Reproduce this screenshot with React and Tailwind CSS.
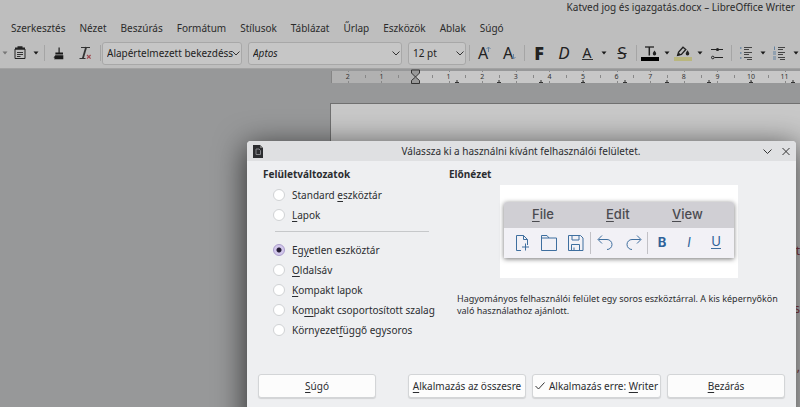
import { useState } from "react";

const menus = [
  "Szerkesztés",
  "Nézet",
  "Beszúrás",
  "Formátum",
  "Stílusok",
  "Táblázat",
  "Űrlap",
  "Eszközök",
  "Ablak",
  "Súgó",
];

// text before the access key, the key itself, text after it
const variants = [
  { id: "standard", label: ["Standard ", "e", "szköztár"] },
  { id: "tabbed", label: ["", "L", "apok"] },
  { id: "single", label: ["Eg", "y", "etlen eszköztár"] },
  { id: "sidebar", label: ["", "O", "ldalsáv"] },
  { id: "compact", label: ["", "K", "ompakt lapok"] },
  { id: "grouped", label: ["Ko", "m", "pakt csoportosított szalag"] },
  { id: "contextual", label: ["Környezet", "f", "üggő egysoros"] },
];

const AccessLabel = ({ parts }) => (
  <span>
    {parts[0]}
    <span className="underline underline-offset-2">{parts[1]}</span>
    {parts[2]}
  </span>
);

const Separator = ({ wide }) => (
  <div className={`flex shrink-0 justify-center ${wide ? "w-1.5" : "w-1"}`}>
    <div className="h-4 w-px bg-[#a5a5a5]" />
  </div>
);

const Caret = ({ wide, label, faded }) => (
  <button
    aria-label={label}
    className={`flex h-6 shrink-0 items-center justify-center ${wide ? "w-3" : "w-2.5"} ${
      faded ? "text-[#777]" : "text-[#1a1a1a]"
    }`}
  >
    <svg width="6" height="4" viewBox="0 0 6 4">
      <path d="M0.5 0.5h5L3 3.6z" fill="currentColor" />
    </svg>
  </button>
);

const Tool = ({ label, width = "w-6", children }) => (
  <button
    aria-label={label}
    className={`flex h-6 shrink-0 items-center justify-center ${width}`}
  >
    {children}
  </button>
);

const Combo = ({ label, value, width, italic }) => (
  <div className={`relative shrink-0 ${width}`}>
    <select
      aria-label={label}
      className={`h-[23px] w-full appearance-none rounded-[3px] border border-[#a8a8a8] bg-[#c6c6c6] pl-1 text-[10px] text-[#222] ${
        italic ? "italic" : ""
      }`}
    >
      <option>{value}</option>
    </select>
    <svg
      className="pointer-events-none absolute top-2 right-0.5"
      width="8"
      height="7"
      viewBox="0 0 8 7"
      fill="none"
      stroke="#333"
    >
      <path d="M0.5 1.5L4 5l3.500-3.500" />
    </svg>
  </div>
);

const Toolbar = () => (
  <div className="flex h-[30px] items-center overflow-hidden text-[#222]">
    <Caret label="Kivágás" faded />
    <Tool label="Beillesztés" width="w-5">
      <svg width="12" height="14" viewBox="0 0 12 14" fill="none" stroke="#222">
        <path d="M1 3h10v9.5H1z" />
        <path d="M1 2.5h10M3.5 1.2h5" strokeWidth="2" />
        <path d="M3 6.5h6M3 8.5h6M3 10.5h3.5" strokeWidth="0.9" />
      </svg>
    </Tool>
    <Caret label="Beillesztés módja" wide />
    <Separator />
    <Tool label="Formátum másolása" width="w-[26px]">
      <svg width="12" height="13" viewBox="0 0 12 13" fill="#1a1a1a">
        <path d="M5.5 0.5h1.2v5h3.3v2H2.4v-2h3.1z" />
        <path d="M2.3 8.2h8v4H1l1-1.4H.5z" />
      </svg>
    </Tool>
    <Tool label="Formázás törlése" width="w-[26px]">
      <svg width="13" height="14" viewBox="0 0 13 14" fill="none" stroke="#333">
        <path d="M2 1.5h9M0.5 12.5h6" />
        <path d="M7.2 1L3.8 12.5" strokeWidth="1.8" />
        <path d="M8 9l3.6 3.6M11.6 9L8 12.6" stroke="#a0484f" strokeWidth="1.2" />
      </svg>
    </Tool>
    <Separator />
    <Combo label="Bekezdésstílus" value="Alapértelmezett bekezdéss" width="w-[140px]" />
    <div className="w-1.5 shrink-0" />
    <Combo label="Betűkészlet" value="Aptos" width="w-[154px]" italic />
    <div className="w-1.5 shrink-0" />
    <Combo label="Betűméret" value="12 pt" width="w-[58px]" />
    <Separator wide />
    <Tool label="Betűméret növelése" width="w-[25px]">
      <span className="text-[16px] leading-4">A</span>
      <svg className="-ml-0.5 mb-2" width="5" height="6" viewBox="0 0 5 6" fill="none" stroke="#6584a3">
        <path d="M2.5 6V1M0.5 3l2-2 2 2" />
      </svg>
    </Tool>
    <Tool label="Betűméret csökkentése" width="w-[25px]">
      <span className="text-[16px] leading-4">A</span>
      <svg className="-ml-0.5 mt-2" width="5" height="6" viewBox="0 0 5 6" fill="none" stroke="#6584a3">
        <path d="M2.5 0v5M0.5 3l2 2 2-2" />
      </svg>
    </Tool>
    <Separator />
    <Tool label="Félkövér" width="w-[26px]">
      <span className="text-[18px] leading-4 font-black">F</span>
    </Tool>
    <Tool label="Dőlt">
      <span className="text-[17px] leading-4 italic">D</span>
    </Tool>
    <Tool label="Aláhúzás" width="w-[22px]">
      <span className="w-[11px] border-b border-[#333] text-center text-[14px] leading-[13px]">A</span>
    </Tool>
    <Caret label="Aláhúzás stílusa" wide />
    <Tool label="Áthúzott">
      <span className="text-[17px] leading-4 line-through decoration-1">S</span>
    </Tool>
    <Separator />
    <Tool label="Betűszín">
      <svg width="18" height="16" viewBox="0 0 18 16" fill="none" stroke="#222">
        <path d="M4 2h9" strokeWidth="1.3" />
        <path d="M8.3 2v8.5" strokeWidth="1.5" />
        <path d="M13.5 5.5c1 1.6 1.7 2.3 1.7 3.3a1.7 1.7 0 0 1-3.4 0c0-1 .7-1.7 1.7-3.3z" fill="#222" stroke="none" />
        <path d="M0 12h18v4H0z" fill="#000" stroke="none" />
      </svg>
    </Tool>
    <Caret label="Betűszín választása" />
    <Tool label="Kiemelés színe" width="w-[22px]">
      <svg width="18" height="16" viewBox="0 0 18 16" fill="none" stroke="#222">
        <path d="M4.5 7.2L9 2.2l2.8 2.3-4.4 5-3.8.9z" strokeWidth="1.3" />
        <path d="M3.2 10.8l1.3-3.4 2.8 2.3z" fill="#222" stroke="none" />
        <path d="M13.5 5.2c1 1.6 1.8 2.4 1.8 3.5a1.8 1.8 0 0 1-3.6 0c0-1.1.8-1.9 1.8-3.5z" fill="#222" stroke="none" />
        <path d="M0 12h18v4H0z" fill="#b9b67e" stroke="none" />
      </svg>
    </Tool>
    <Caret label="Kiemelés választása" wide />
    <Tool label="Bekezdés" width="w-[22px]">
      <svg width="12" height="13" viewBox="0 0 12 13" fill="none" stroke="#222">
        <path d="M0 2.5h12M3.5 10.5H12" />
        <circle cx="6.5" cy="2.5" r="1.6" fill="#222" stroke="none" />
        <circle cx="1.8" cy="10.5" r="1.3" />
      </svg>
    </Tool>
    <Separator wide />
    <Tool label="Felsorolás">
      <svg width="14" height="14" viewBox="0 0 14 14" fill="none" stroke="#444">
        <path d="M5 1.5h8M5 3.5h5M5 6.5h8M5 8.5h5M5 11.5h8M8 13.5h5" />
        <path d="M1 2h1.5M1 7h1.5M1 12h1.5" stroke="#6584a3" strokeWidth="1.5" />
      </svg>
    </Tool>
    <Caret label="Felsorolás választása" />
    <Tool label="Számozás" width="w-[22px]">
      <svg width="14" height="14" viewBox="0 0 14 14" fill="none" stroke="#444">
        <path d="M6 1.5h7M6 3.5h5M6 6.5h7M6 8.5h5M6 11.5h7M8 13.5h5" />
        <path d="M2.5 0.5V4M1 6h3M1 8h3M1 11h3M1 13h3" stroke="#6584a3" />
      </svg>
    </Tool>
    <Caret label="Számozás választása" wide />
  </div>
);

// one centimetre on the ruler
const CM = 33.6;
const ZERO = 84;

const Ruler = () => {
  const marks = [-2, -1, 1, 2, 3, 4, 5, 6, 7, 8, 9, 10, 11];
  const halves = [-1.5, -0.5, 0.5, 1.5, 2.5, 3.5, 4.5, 5.5, 6.5, 7.5, 8.5, 9.5, 10.5];
  const tabs = [1, 2, 3, 4, 5, 6, 7, 8, 9];

  return (
    <svg className="ml-[331px] block h-4 w-[1200px]" viewBox="0 0 1200 16">
      <path d={`M0 2h${ZERO}v12H0z`} fill="#b1b1b1" />
      <path d={`M${ZERO} 2H1200v12H${ZERO}z`} fill="#c7c7c7" />
      <path d="M0.5 2v12" stroke="#858585" />
      {marks.map((n) => (
        <g key={n}>
          <path d={`M${Math.round(ZERO + n * CM)}.5 2v1M${Math.round(ZERO + n * CM)}.5 12v2`} stroke="#888" />
          <text x={ZERO + n * CM} y="10" fontSize="7" fill="#333" textAnchor="middle">
            {Math.abs(n)}
          </text>
        </g>
      ))}
      {halves.map((n) => (
        <path key={n} d={`M${Math.round(ZERO + n * CM)}.5 6v3`} stroke="#888" />
      ))}
      {tabs.map((n) => (
        <path key={n} d={`M${ZERO + n * 42} 11v3M${ZERO + n * 42 - 2} 13.5h4`} stroke="#333" />
      ))}
      <path d="M80.5 1h8v3l-4 4-4-4zM84.5 8l4 3.5v3h-8v-3z" fill="#999" stroke="#333" />
    </svg>
  );
};

const Preview = () => (
  <div className="h-[93px] w-[238px] bg-white px-1 pt-[17px] font-['Inter',sans-serif]">
    <div className="overflow-hidden rounded-t-[3px] bg-[#f2f1f6] shadow-[0_1px_5px_rgba(0,0,0,0.55)]">
      <div className="flex h-[26px] items-center bg-[#d0cfd4] pl-7 text-[13px] font-medium text-[#4b4b50]">
        <span className="w-[74px]"><span className="underline underline-offset-2">F</span>ile</span>
        <span className="w-[66px]"><span className="underline underline-offset-2">E</span>dit</span>
        <span><span className="underline underline-offset-2">V</span>iew</span>
      </div>
      <svg className="block" width="230" height="30" viewBox="0 0 230 30" fill="none" stroke="#3f6f9f">
        <path d="M17 22.5h-4.5v-15h7l4 4V17M19.5 7.5v4h4M21.5 15.5v7M18 19h7" />
        <path d="M37.5 22.5v-15H43l2 2.5h7.5v12.5zM37.500 10H45" />
        <path d="M64.5 7.5h12l2.5 2.5v12.5H64.5zM68 7.5v4.5h7V7.5M67.5 22.5v-6h8v6M70 19.5v3" />
        <path d="M86.5 4v22M143.5 4v22" stroke="#c2c1c6" />
        <path d="M98 7.5l-4 4 4 4M94.5 11.5h8.5a5 5 0 0 1 0 10" />
        <path d="M133 7.5l4 4-4 4M136.5 11.5H128a5 5 0 0 0 0 10" />
        <g fill="#2f6299" stroke="none" fontSize="13" textAnchor="middle">
          <text x="158" y="19" fontWeight="700">B</text>
          <text x="185" y="19" fontStyle="italic">I</text>
          <text x="212" y="18">U</text>
        </g>
        <path d="M207 20.5h10" />
      </svg>
    </div>
  </div>
);

const DialogButton = ({ children, className }) => (
  <button
    className={`flex h-6 items-center justify-center gap-1 rounded-[3px] border border-[#d3d5d7] bg-[#fcfcfc] whitespace-nowrap shadow-[0_1px_1px_rgba(0,0,0,0.12)] ${className}`}
  >
    {children}
  </button>
);

const Dialog = () => {
  const [selected, setSelected] = useState("single");

  return (
    <div
      role="dialog"
      aria-labelledby="dialog-title"
      className="absolute top-[141px] right-1 left-[247px] flex h-[290px] flex-col rounded-t-[4px] bg-[#eeeff1] text-[10px] text-[#2b2d30] shadow-[0_6px_30px_2px_rgba(0,0,0,0.65)]"
    >
      <header className="flex h-5 shrink-0 items-center rounded-t-[4px] bg-[#dfe0e2] px-1.5">
        <svg width="10" height="13" viewBox="0 0 10 13">
          <path d="M0 0h7l3 3v10H0z" fill="#2c2d30" />
          <path d="M7 0l3 3H7z" fill="#777" />
          <path d="M3 4h3l1.5 1.5v4H3z" fill="none" stroke="#85868a" />
        </svg>
        <h1 id="dialog-title" className="flex-1 pl-4 text-center">
          Válassza ki a használni kívánt felhasználói felületet.
        </h1>
        <button aria-label="Összecsukás">
          <svg width="9" height="9" viewBox="0 0 9 9" fill="none" stroke="#333">
            <path d="M0.5 2.5l4 4 4-4" />
          </svg>
        </button>
        <button aria-label="Ablak bezárása" className="ml-2.5">
          <svg width="8" height="9" viewBox="0 0 8 9" fill="none" stroke="#333">
            <path d="M0.5 1l7 7M7.5 1l-7 7" />
          </svg>
        </button>
      </header>

      <div className="flex h-[213px] pt-1.5 pl-4">
        <fieldset className="w-[186px] shrink-0">
          <legend className="h-[18px] font-bold">Felületváltozatok</legend>
          {variants.map((v) => (
            <div key={v.id}>
              {v.id === "single" && <hr className="mt-1.5 mr-5 mb-2 ml-3 border-[#c6c8ca]" />}
              <label className="ml-2.5 flex h-5 items-center gap-[7px] whitespace-nowrap">
                <input
                  type="radio"
                  name="variant"
                  checked={selected === v.id}
                  onChange={() => setSelected(v.id)}
                  className="size-3 shrink-0 appearance-none rounded-full border border-[#d0d2d4] bg-white checked:border-[#a99bcb] checked:bg-[radial-gradient(circle,#241c35_2px,#d3c8ec_3px)]"
                />
                <AccessLabel parts={v.label} />
              </label>
            </div>
          ))}
        </fieldset>

        <section className="flex-1">
          <h2 className="h-[18px] font-bold">Előnézet</h2>
          <div className="ml-[51px]">
            <Preview />
          </div>
          <p className="mt-[15px] ml-2 text-[9px] leading-3">
            Hagyományos felhasználói felület egy soros eszköztárral. A kis képernyőkön való használathoz ajánlott.
          </p>
        </section>
      </div>

      <footer className="flex gap-1.5 px-[11px]">
        <DialogButton className="mr-auto w-[118px]">
          <AccessLabel parts={["", "S", "úgó"]} />
        </DialogButton>
        <DialogButton className="w-[118px]">
          <AccessLabel parts={["", "A", "lkalmazás az összesre"]} />
        </DialogButton>
        <DialogButton className="w-[129px]">
          <svg width="10" height="8" viewBox="0 0 10 8" fill="none" stroke="#333">
            <path d="M0.5 4l3 3 6-6.5" />
          </svg>
          <AccessLabel parts={["Alkalmazás erre: ", "W", "riter"]} />
        </DialogButton>
        <DialogButton className="w-[118px]">
          <AccessLabel parts={["", "B", "ezárás"]} />
        </DialogButton>
      </footer>
    </div>
  );
};

const App = () => (
  <div className="relative flex h-screen flex-col overflow-hidden bg-[#979899] font-['Noto_Sans',sans-serif]">
    <div className="shrink-0 border-b border-[#a3a3a3] bg-[#bebebe] text-[10px] text-[#2b2b2b]">
      <div className="pt-px pr-[5px] text-right leading-3">
        Katved jog és igazgatás.docx – LibreOffice Writer
      </div>
      <nav className="flex h-[25px] items-center gap-3.5 pt-1.5 pl-[11px]">
        {menus.map((menu) => (
          <button key={menu}>{menu}</button>
        ))}
      </nav>
      <Toolbar />
    </div>

    <main className="flex flex-1 flex-col overflow-hidden">
      <Ruler />
      {/* the page */}
      <div className="mt-[18px] ml-[330px] flex-1 border-t border-l border-[#707070] bg-[#c8c8c8] pt-[138px] text-right text-[12px] text-[#8a3c46]">
        <p className="h-[58px]">t</p>
        <p className="h-[58px]">s</p>
        <p>,</p>
      </div>
    </main>

    <Dialog />
  </div>
);

export default App;
